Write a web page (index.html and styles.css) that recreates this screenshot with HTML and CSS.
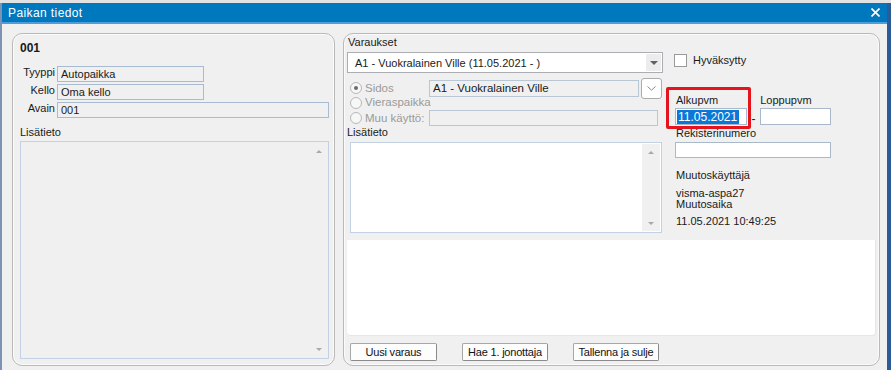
FILE: index.html
```html
<!DOCTYPE html>
<html lang="fi">
<head>
    <meta charset="UTF-8">
    <title>Paikan tiedot</title>
    <link rel="stylesheet" href="styles.css">
</head>
<body>
    <div class="backdrop"></div>
    <div class="window">
        <div class="titlebar">
            <span class="title">Paikan tiedot</span>
            <svg class="close" width="9" height="9" viewBox="0 0 9 9"><path d="M0.5 0.5L8.5 8.5M8.5 0.5L0.5 8.5" stroke="#fff" stroke-width="1.6"/></svg>
        </div>
        <div class="body">
            <section class="panel panel-place">
                <div class="place-no">001</div>
                <div class="fields">
                    <label>Tyyppi</label><div class="field field-short">Autopaikka</div>
                    <label>Kello</label><div class="field field-short">Oma kello</div>
                    <label>Avain</label><div class="field">001</div>
                </div>
                <div class="caption">Lisätieto</div>
                <div class="memo memo-disabled">
                    <div class="scroll"><span class="arrow-up"></span><span class="arrow-down"></span></div>
                </div>
            </section>

            <section class="panel panel-booking">
                <div class="booking-top">
                    <div class="booking-main">
                        <div class="caption">Varaukset</div>
                        <div class="combo">
                            <span>A1 - Vuokralainen Ville (11.05.2021 - )</span>
                            <span class="drop"><span class="arrow-down dark"></span></span>
                        </div>
                        <div class="usage">
                            <div class="radio-row row-1"><span class="radio checked"></span>Sidos</div>
                            <div class="usage-field row-1">
                                <div class="field field-gray">A1 - Vuokralainen Ville</div>
                                <div class="chevron">
                                    <svg width="9" height="5" viewBox="0 0 9 5"><path d="M0.5 0.5L4.5 4.2L8.5 0.5" fill="none" stroke="#8a8a8a" stroke-width="1"/></svg>
                                </div>
                            </div>
                            <div class="radio-row row-2"><span class="radio"></span>Vieraspaikka</div>
                            <div class="row-2"></div>
                            <div class="radio-row row-3"><span class="radio"></span>Muu käyttö:</div>
                            <div class="usage-field row-3"><div class="field field-gray field-other"></div></div>
                        </div>
                        <div class="caption">Lisätieto</div>
                        <div class="memo memo-white">
                            <div class="scroll"><span class="arrow-up"></span><span class="arrow-down"></span></div>
                        </div>
                    </div>

                    <div class="booking-side">
                        <div class="check-row"><span class="checkbox"></span>Hyväksytty</div>
                        <div class="date-labels">
                            <span class="lbl-start">Alkupvm</span>
                            <span class="lbl-end">Loppupvm</span>
                        </div>
                        <div class="date-inputs">
                            <div class="field field-white field-start"><span class="selected">11.05.2021</span><span class="caret"></span></div>
                            <span class="dash">-</span>
                            <div class="field field-white field-end"></div>
                        </div>
                        <div class="side-label">Rekisterinumero</div>
                        <div class="field field-white field-reg"></div>
                        <div class="side-text modified-by">Muutoskäyttäjä</div>
                        <div class="side-text tight first">visma-aspa27</div>
                        <div class="side-text tight">Muutosaika</div>
                        <div class="side-text modified-at">11.05.2021 10:49:25</div>
                        <div class="highlight"></div>
                    </div>
                </div>

                <div class="notes-area"></div>

                <div class="actions">
                    <button>Uusi varaus</button>
                    <button>Hae 1. jonottaja</button>
                    <button>Tallenna ja sulje</button>
                </div>
            </section>
        </div>
    </div>
</body>
</html>
```

FILE: styles.css
```css
html, body {
    margin: 0;
    padding: 0;
}
body {
    width: 891px;
    height: 370px;
    overflow: hidden;
    font-family: "Liberation Sans", Arial, sans-serif;
    font-size: 11px;
    color: #1a1a1a;
    background-color: #e4e4e4;
}
.backdrop {
    height: 3px;
    background-color: #e2e2e2;
}
.window {
    height: 367px;
    background-color: #f0f0f0;
    border-left: 2px solid #7d93b3;
    border-right: 4px solid #2c5a9a;
    box-sizing: border-box;
}
.titlebar {
    height: 19px;
    background-color: #0078be;
    border-bottom: 2px solid #4f9edb;
    display: flex;
    align-items: center;
    justify-content: space-between;
    padding: 0 6px 0 6px;
}
.title {
    color: #fff;
    font-size: 12px;
    letter-spacing: 0.4px;
}
.close {
    display: block;
    margin-right: 1px;
}
.body {
    display: flex;
    gap: 8px;
    padding: 9px 7px 0 10px;
}
.panel {
    height: 333px;
    box-sizing: border-box;
    border: 1px solid #b9b9b9;
    border-radius: 10px;
    box-shadow: inset 0 0 0 1px #fbfbfb;
    display: flex;
    flex-direction: column;
}
.panel-place {
    width: 323px;
    padding: 6px 5px 5px 7px;
}
.panel-booking {
    width: 537px;
    padding: 2px 3px 0 3px;
}
.place-no {
    font-weight: bold;
    font-size: 12px;
    line-height: 14px;
    height: 14px;
    margin-top: 1px;
}
.fields {
    margin-top: 11px;
    display: grid;
    grid-template-columns: 37px 1fr;
    grid-auto-rows: 16px;
    row-gap: 2px;
}
.fields label {
    text-align: right;
    line-height: 13px;
    padding-right: 2px;
}
.field {
    box-sizing: border-box;
    height: 16px;
    border: 1px solid #a8bbd1;
    background-color: #f0f0f0;
    line-height: 14px;
    padding-left: 3px;
    white-space: nowrap;
    overflow: hidden;
}
.field-short {
    width: 147px;
}
.caption {
    line-height: 13px;
    height: 13px;
}
.panel-place .caption {
    margin-top: 8px;
}
.memo {
    box-sizing: border-box;
    border: 1px solid #c2d2e4;
    display: flex;
    justify-content: flex-end;
}
.memo-disabled {
    margin-top: 2px;
    height: 218px;
    background-color: #f0f0f0;
}
.memo-white {
    margin-top: 3px;
    margin-left: 3px;
    width: 312px;
    height: 91px;
    background-color: #fff;
}
.scroll {
    width: 18px;
    margin: 1px 1px 1px 0;
    background-color: #f0f0f0;
    display: flex;
    flex-direction: column;
    justify-content: space-between;
    align-items: center;
    padding: 7px 0 6px;
    box-sizing: border-box;
}
.memo-disabled .scroll {
    background-color: transparent;
    margin-right: 0;
}
.arrow-up, .arrow-down {
    width: 0;
    height: 0;
    border-left: 3px solid transparent;
    border-right: 3px solid transparent;
}
.arrow-up {
    border-bottom: 3px solid #a9a9a9;
}
.arrow-down {
    border-top: 3px solid #a9a9a9;
}
.arrow-down.dark {
    border-left-width: 4px;
    border-right-width: 4px;
    border-top: 4px solid #606060;
}

/* booking panel */
.booking-top {
    display: flex;
}
.booking-main {
    width: 316px;
}
.booking-main > .caption:first-child {
    margin-left: 1px;
}
.combo {
    margin-top: 3px;
    height: 21px;
    box-sizing: border-box;
    border: 1px solid #abadb3;
    background-color: #fff;
    display: flex;
    align-items: center;
    justify-content: space-between;
    padding-left: 7px;
}
.drop {
    width: 15px;
    height: 17px;
    margin-right: 1px;
    background-color: #ececec;
    display: flex;
    align-items: center;
    justify-content: center;
}
.usage {
    margin-top: 5px;
    display: grid;
    grid-template-columns: 82px 234px;
    grid-template-rows: 20px 12px 16px;
}
.radio-row {
    display: flex;
    align-items: center;
    color: #9a9a9a;
    font-size: 11.5px;
    padding-left: 3px;
}
.row-2.radio-row {
    align-items: flex-start;
    line-height: 11px;
    margin-top: -1px;
}
.radio {
    width: 10px;
    height: 10px;
    border: 1px solid #b8b8b8;
    border-radius: 50%;
    background-color: #f7f7f7;
    margin-right: 3px;
    position: relative;
    flex-shrink: 0;
}
.radio.checked::after {
    content: "";
    position: absolute;
    left: 3px;
    top: 3px;
    width: 4px;
    height: 4px;
    border-radius: 50%;
    background-color: #6a6a6a;
}
.usage-field {
    display: flex;
    align-items: center;
    gap: 2px;
}
.field-gray {
    height: 17px;
    width: 210px;
    border-color: #b9c6d4;
    font-size: 11.5px;
    line-height: 15px;
}
.field-other {
    width: 229px;
    height: 16px;
}
.chevron {
    width: 21px;
    height: 21px;
    box-sizing: border-box;
    border: 1px solid #acacac;
    border-radius: 3px;
    background-color: #fff;
    display: flex;
    align-items: center;
    justify-content: center;
}
.booking-side {
    margin-left: 12px;
    width: 160px;
    position: relative;
}
.check-row {
    margin-top: 18px;
    line-height: 13px;
    display: flex;
    align-items: center;
    padding-left: 1px;
}
.checkbox {
    width: 11px;
    height: 11px;
    margin-left: -2px;
    margin-right: 6px;
    border: 1px solid #9a9a9a;
    background-color: #fff;
}
.date-labels {
    margin-top: 27px;
    line-height: 13px;
    display: flex;
    padding-left: 1px;
}
.lbl-end {
    margin-left: 42px;
}
.date-inputs {
    margin-top: 1px;
    display: flex;
    align-items: center;
}
.field-white {
    background-color: #fff;
    border-color: #a9b9cb;
}
.field-start {
    width: 72px;
    height: 17px;
    padding-left: 1px;
    display: flex;
    align-items: center;
}
.selected {
    background-color: #0a78d7;
    color: #fff;
    font-size: 12px;
    line-height: 14px;
    padding: 0 2px 0 1px;
}
.caret {
    width: 1px;
    height: 13px;
    background-color: #111;
    margin-left: 12px;
}
.dash {
    width: 13px;
    text-align: center;
    font-size: 12px;
    line-height: 12px;
    margin-top: 4px;
}
.field-end {
    width: 71px;
    height: 17px;
}
.side-label {
    margin-top: 2px;
    line-height: 13px;
    padding-left: 1px;
}
.field-reg {
    margin-top: 2px;
    width: 156px;
}
.side-text {
    line-height: 13px;
    padding-left: 1px;
}
.modified-by {
    margin-top: 11px;
}
.side-text.tight {
    line-height: 11px;
}
.side-text.first {
    margin-top: 6px;
}
.modified-at {
    margin-top: 5px;
}
/* red annotation frame around the start date */
.highlight {
    position: absolute;
    left: -9px;
    top: 51px;
    width: 85px;
    height: 42px;
    box-sizing: border-box;
    border: 3px solid #e5131b;
    border-radius: 2px;
}
.notes-area {
    margin-top: 7px;
    height: 96px;
    background-color: #fff;
    border-radius: 0 0 4px 4px;
    border-bottom: 1px solid #e6e6e6;
    border-right: 1px solid #e6e6e6;
    box-sizing: border-box;
}
.actions {
    margin-top: 7px;
    margin-left: 3px;
    display: flex;
    gap: 25px;
}
.actions button {
    font-family: "Liberation Sans", Arial, sans-serif;
    font-size: 11px;
    color: #111;
    width: 87px;
    height: 18px;
    padding: 0;
    background-color: #fdfdfd;
    border: 1px solid #a7a7a7;
    border-bottom-color: #8a8a8a;
    border-right-color: #8a8a8a;
    border-radius: 2px;
    letter-spacing: -0.2px;
}
.actions button + button {
    width: 86px;
}
```
